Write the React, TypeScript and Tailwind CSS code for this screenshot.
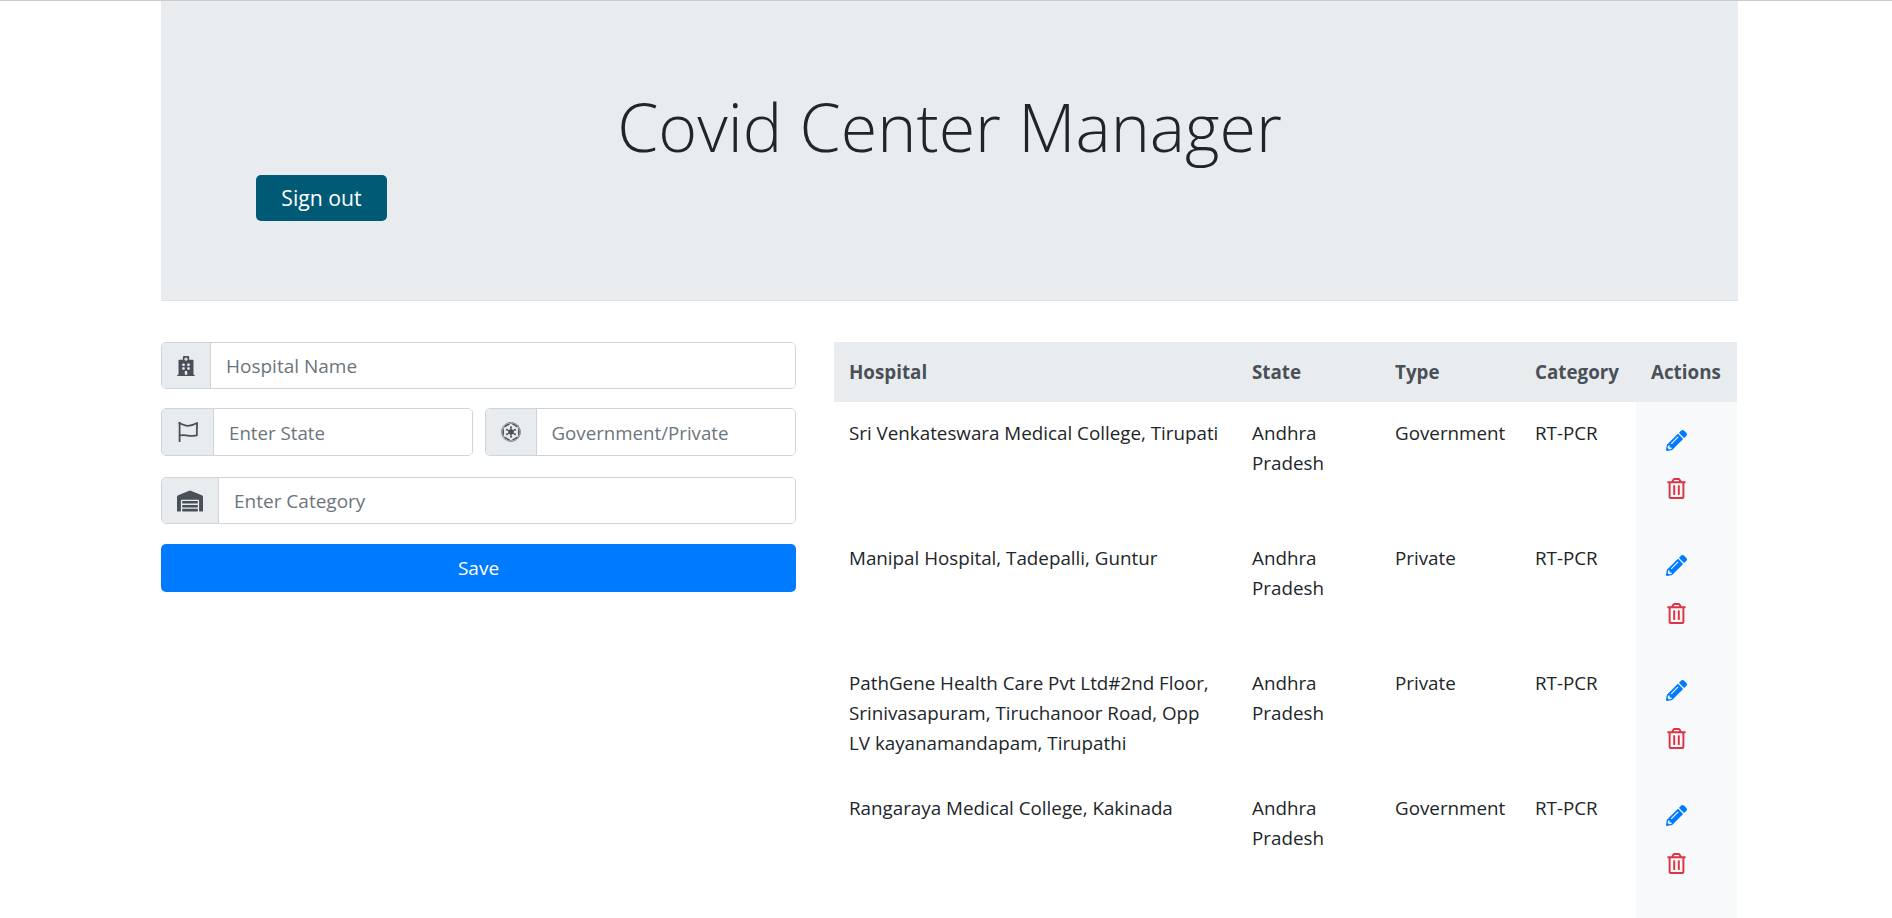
import { ComponentType } from "react";
import { FaEmpire, FaHospital, FaPencilAlt, FaRegTrashAlt, FaWarehouse } from "react-icons/fa";

const centers = [
  { hospital: "Sri Venkateswara Medical College, Tirupati", type: "Government" },
  { hospital: "Manipal Hospital, Tadepalli, Guntur", type: "Private" },
  {
    hospital: "PathGene Health Care Pvt Ltd#2nd Floor, Srinivasapuram, Tiruchanoor Road, Opp LV kayanamandapam, Tirupathi",
    type: "Private",
  },
  { hospital: "Rangaraya Medical College, Kakinada", type: "Government" },
];

function FlagIcon({ size }: { size?: number }) {
  return (
    <svg width={size} height={size} viewBox="0 0 20 20" fill="none" stroke="currentColor" strokeWidth="1.8" strokeLinejoin="round">
      <path d="M1.6 0V20" />
      <path d="M0.6 1C3.5 1.4 6 4 10 3.8C13 3.6 16 2.8 19.2 1C18.8 5 18.8 9.5 18.9 13.4C15.5 13.8 13 14.4 10 13.6C7 12.8 4.5 13 1.6 13.4" />
    </svg>
  );
}

function Field({
  icon: Icon,
  placeholder,
  addonWidth,
  iconSize,
  small,
  className,
}: {
  icon: ComponentType<{ size?: number }>;
  placeholder: string;
  addonWidth: string;
  iconSize: number;
  small?: boolean;
  className?: string;
}) {
  return (
    <div className={`flex rounded-[5px] border border-[#ced4da] overflow-hidden ${small ? "h-[48px]" : "h-[47px]"} ${className ?? ""}`}>
      <div className={`flex items-center justify-center bg-[#e9ecef] border-r border-[#ced4da] text-[#495057] shrink-0 ${addonWidth}`}>
        <Icon size={iconSize} />
      </div>
      <input
        placeholder={placeholder}
        className={`flex-1 min-w-0 px-[15px] pt-[2px] outline-none bg-white placeholder:text-[#6c757d] ${small ? "text-[18.7px]" : "text-[19px]"}`}
      />
    </div>
  );
}

export default function App() {
  return (
    <div className="border-t border-[#cccccc] bg-white text-[#212529] font-['Open_Sans',sans-serif] h-[918px] overflow-hidden">
      <div className="w-[1577px] ml-[161px]">
        <div className="bg-[#e9ecef] h-[300px] pt-[80px] pl-[95px] border-b border-[#dee2e6]">
          <h1 className="-ml-[95px] text-center text-[66.4px] font-light leading-[84px] mb-[10px] relative top-[3px]">Covid Center Manager</h1>
          <button className="bg-[#005a75] text-white rounded-[5px] h-[46px] w-[131px] text-[21.2px]">Sign out</button>
        </div>

        <div className="flex gap-[38px] mt-[41px]">
          <div className="w-[635px] shrink-0 flex flex-col gap-[20px]">
            <Field icon={FaHospital} placeholder="Hospital Name" addonWidth="w-[49px]" iconSize={20} />
            <div className="flex gap-[12px] -mt-[1px]">
              <Field icon={FlagIcon} placeholder="Enter State" addonWidth="w-[52px]" iconSize={20} small className="flex-1" />
              <Field icon={FaEmpire} placeholder="Government/Private" addonWidth="w-[51px]" iconSize={20} small className="flex-1" />
            </div>
            <Field icon={FaWarehouse} placeholder="Enter Category" addonWidth="w-[57px]" iconSize={26} className="mt-[1px]" />
            <button className="bg-[#007bff] text-white rounded-[5px] h-[48px] text-[19px]">Save</button>
          </div>

          <table className="w-[903px] table-fixed border-collapse text-[18.8px] leading-[30px]">
            <thead>
              <tr className="bg-[#e9ecef] text-[#495057] text-left h-[60px]">
                <th className="w-[403px] px-[15px] font-bold">Hospital</th>
                <th className="w-[143px] px-[15px] font-bold">State</th>
                <th className="w-[140px] px-[15px] font-bold">Type</th>
                <th className="w-[116px] px-[15px] font-bold">Category</th>
                <th className="w-[101px] px-[15px] font-bold">Actions</th>
              </tr>
            </thead>
            <tbody>
              {centers.map((c) => (
                <tr key={c.hospital} className="h-[125px] align-top">
                  <td className="px-[15px] py-[15.5px]">{c.hospital}</td>
                  <td className="px-[15px] py-[15.5px]">Andhra Pradesh</td>
                  <td className="px-[15px] py-[15.5px]">{c.type}</td>
                  <td className="px-[15px] py-[15.5px]">RT-PCR</td>
                  <td className="bg-[#f8f9fa] pl-[30px] pt-[28px]">
                    <div className="flex flex-col gap-[27px]">
                      <FaPencilAlt size={21} className="text-[#007bff]" />
                      <FaRegTrashAlt size={21} className="text-[#dc3545]" />
                    </div>
                  </td>
                </tr>
              ))}
              <tr className="h-[20px]">
                <td colSpan={4}></td>
                <td className="bg-[#f8f9fa]"></td>
              </tr>
            </tbody>
          </table>
        </div>
      </div>
    </div>
  );
}
